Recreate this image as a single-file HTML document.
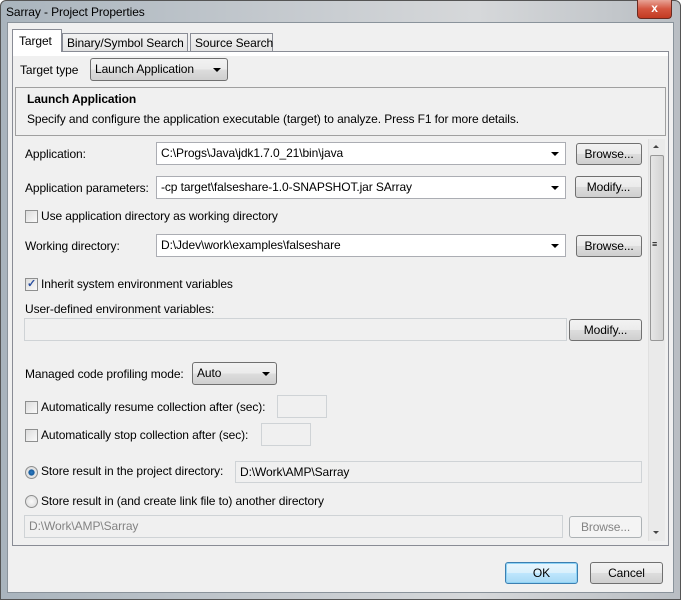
<!DOCTYPE html>
<html><head><style>
*{box-sizing:border-box;margin:0;padding:0}
body{width:681px;height:600px;overflow:hidden;background:#fff;font-family:"Liberation Sans",sans-serif;font-size:12px;color:#000;position:relative;letter-spacing:-0.1px}
.a{position:absolute}
.frame{left:0;top:0;width:681px;height:600px;background:linear-gradient(90deg,#a9b4bd,#c4c9ce 40%,#d6d8da 70%,#b9bec3);border:1px solid #555;border-radius:6px 6px 0 0}
.client{left:7px;top:22px;width:667px;height:571px;background:#f0f0f0;border:1px solid #8a939b}
.t{white-space:nowrap;line-height:14px}
.btn{border:1px solid #707070;border-radius:3px;background:linear-gradient(#f2f2f2,#ebebeb 50%,#dddddd 51%,#cfcfcf);text-align:center;line-height:20px;white-space:nowrap}
.dis{border-color:#adb2b5;background:#f4f4f4;color:#838383}
.cb{border:1px solid #abadb3;background:#fff;line-height:20px;padding-left:4px;white-space:nowrap}
.arr{position:absolute;right:6px;top:9px;width:0;height:0;border-left:4px solid transparent;border-right:4px solid transparent;border-top:4px solid #000}
.chk{width:13px;height:13px;border:1px solid #8e8f8f;background:linear-gradient(135deg,#dcdcdc,#fafafa)}
.rad{width:13px;height:13px;border-radius:50%;border:1px solid #8e8f8f;background:radial-gradient(#fafafa,#d8d8d8)}
.tb{border:1px solid #cfd3d6;background:#f0f0f0;line-height:20px;padding-left:4px;white-space:nowrap}
</style></head><body>
<div class="a frame"></div>
<div class="a t" style="left:6px;top:5px;font-size:12px">Sarray - Project Properties</div>
<div class="a" style="left:637px;top:0;width:35px;height:19px;border:1px solid #6a2a20;border-top:none;border-radius:0 0 4px 4px;background:linear-gradient(#e8a497,#d4553f 50%,#c23a22);color:#fff;text-align:center;font-weight:bold;font-size:12px;line-height:17px">x</div>
<div class="a client"></div>
<div class="a" style="left:12px;top:51px;width:657px;height:495px;border:1px solid #898c95;background:#f0f0f0"></div>
<div class="a" style="left:62px;top:33px;width:126px;height:19px;border:1px solid #898c95;background:linear-gradient(#f3f3f3,#e3e3e3)"></div>
<div class="a t" style="left:67px;top:36px">Binary/Symbol Search</div>
<div class="a" style="left:190px;top:33px;width:83px;height:19px;border:1px solid #898c95;background:linear-gradient(#f3f3f3,#e3e3e3)"></div>
<div class="a t" style="left:195px;top:36px">Source Search</div>
<div class="a" style="left:12px;top:29px;width:50px;height:24px;border:1px solid #898c95;border-bottom:none;background:#fff"></div>
<div class="a t" style="left:19px;top:34px">Target</div>
<div class="a" style="left:13px;top:52px;width:655px;height:493px;background:#f0f0f0"></div>
<div class="a" style="left:13px;top:52px;width:655px;height:4px;background:#fff"></div>
<div class="a t" style="left:20px;top:63px">Target type</div>
<div class="a btn" style="left:90px;top:58px;width:138px;height:23px;text-align:left;padding-left:4px">Launch Application<span class="arr" style="top:9px"></span></div>
<div class="a" style="left:15px;top:87px;width:651px;height:49px;border:1px solid #a0a0a0;background:#f0f0f0"></div>
<div class="a t" style="left:27px;top:92px;font-weight:bold">Launch Application</div>
<div class="a t" style="left:27px;top:112px">Specify and configure the application executable (target) to analyze. Press F1 for more details.</div>
<div class="a" style="left:648px;top:139px;width:17px;height:402px;background:#eaeaea;border-left:1px solid #e0e0e0"></div>
<div class="a" style="left:653px;top:145px;border-left:3px solid transparent;border-right:3px solid transparent;border-bottom:3px solid #444"></div>
<div class="a" style="left:650px;top:155px;width:14px;height:186px;border:1px solid #979797;border-radius:2px;background:linear-gradient(90deg,#e6e6e6,#d3d3d3)"></div>
<div class="a t" style="left:652px;top:240px;font-size:9px;line-height:9px">≡</div>
<div class="a" style="left:653px;top:531px;border-left:3px solid transparent;border-right:3px solid transparent;border-top:3px solid #444"></div>
<div class="a t" style="left:25px;top:147px">Application:</div>
<div class="a cb" style="left:156px;top:142px;width:410px;height:23px">C:\Progs\Java\jdk1.7.0_21\bin\java<span class="arr"></span></div>
<div class="a btn" style="left:576px;top:143px;width:66px;height:22px">Browse...</div>
<div class="a t" style="left:25px;top:181px">Application parameters:</div>
<div class="a cb" style="left:156px;top:176px;width:410px;height:23px">-cp target\falseshare-1.0-SNAPSHOT.jar SArray<span class="arr"></span></div>
<div class="a btn" style="left:575px;top:176px;width:67px;height:22px">Modify...</div>
<div class="a chk" style="left:25px;top:210px"></div>
<div class="a t" style="left:41px;top:209px">Use application directory as working directory</div>
<div class="a t" style="left:25px;top:239px">Working directory:</div>
<div class="a cb" style="left:156px;top:234px;width:410px;height:23px">D:\Jdev\work\examples\falseshare<span class="arr"></span></div>
<div class="a btn" style="left:576px;top:235px;width:66px;height:22px">Browse...</div>
<div class="a chk" style="left:25px;top:278px;color:#2a4fa0;font-size:11px;line-height:11px;text-align:center;font-weight:bold">✓</div>
<div class="a t" style="left:41px;top:277px">Inherit system environment variables</div>
<div class="a t" style="left:25px;top:302px">User-defined environment variables:</div>
<div class="a tb" style="left:24px;top:318px;width:543px;height:23px"></div>
<div class="a btn" style="left:569px;top:319px;width:73px;height:22px">Modify...</div>
<div class="a t" style="left:25px;top:367px">Managed code profiling mode:</div>
<div class="a btn" style="left:192px;top:362px;width:85px;height:23px;text-align:left;padding-left:4px">Auto<span class="arr"></span></div>
<div class="a chk" style="left:25px;top:401px"></div>
<div class="a t" style="left:41px;top:400px">Automatically resume collection after (sec):</div>
<div class="a tb" style="left:277px;top:395px;width:50px;height:23px"></div>
<div class="a chk" style="left:25px;top:429px"></div>
<div class="a t" style="left:41px;top:428px">Automatically stop collection after (sec):</div>
<div class="a tb" style="left:261px;top:423px;width:50px;height:23px"></div>
<div class="a rad" style="left:25px;top:466px;background:radial-gradient(#2d7cc4 0,#155a9c 35%,#e8e8e8 45%,#d0d0d0)"></div>
<div class="a t" style="left:41px;top:464px">Store result in the project directory:</div>
<div class="a tb" style="left:235px;top:461px;width:407px;height:22px">D:\Work\AMP\Sarray</div>
<div class="a rad" style="left:25px;top:495px"></div>
<div class="a t" style="left:41px;top:494px">Store result in (and create link file to) another directory</div>
<div class="a tb" style="left:24px;top:515px;width:539px;height:23px;color:#838383">D:\Work\AMP\Sarray</div>
<div class="a btn dis" style="left:569px;top:516px;width:73px;height:22px">Browse...</div>
<div class="a btn" style="left:505px;top:562px;width:73px;height:22px;border-color:#3c7fb1;box-shadow:inset 0 0 0 1px #8fd3f5;background:linear-gradient(#eaf6fd,#d9f0fc 50%,#bee6fd 51%,#a7d9f5)">OK</div>
<div class="a btn" style="left:590px;top:562px;width:73px;height:22px">Cancel</div>
</body></html>
